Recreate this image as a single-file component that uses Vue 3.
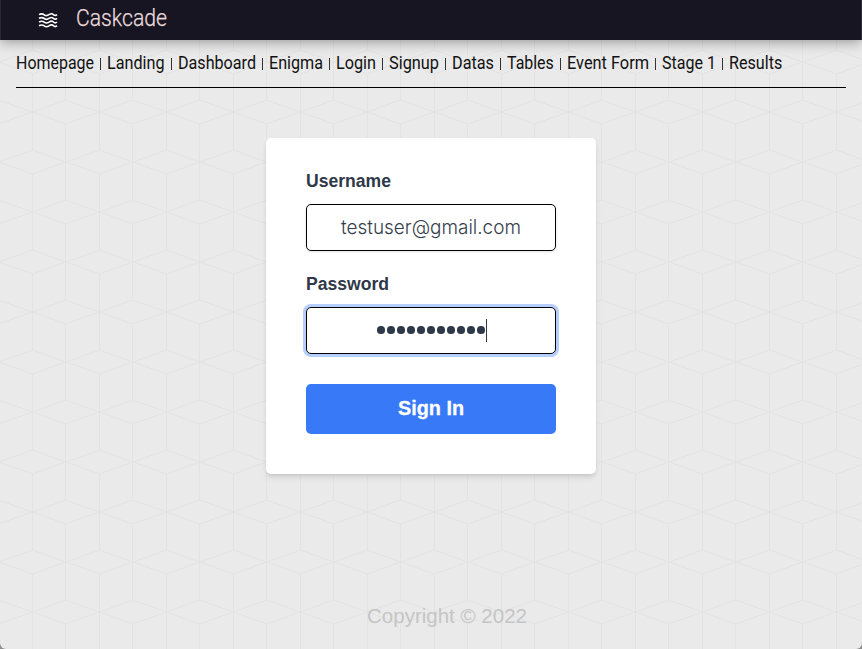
<script setup>
const links = [
  { label: 'Homepage', width: 78 },
  { label: 'Landing', width: 57.5 },
  { label: 'Dashboard', width: 78 },
  { label: 'Enigma', width: 54 },
  { label: 'Login', width: 40 },
  { label: 'Signup', width: 50 },
  { label: 'Datas', width: 42 },
  { label: 'Tables', width: 46.8 },
  { label: 'Event Form', width: 82 },
  { label: 'Stage 1', width: 54 },
  { label: 'Results', width: 53.3 },
]
const waves = [1.6, 5.3, 9, 12.7]
</script>

<template>
  <div class="page">
    <svg class="backdrop" width="862" height="649" aria-hidden="true">
      <defs>
        <pattern id="cubes" x="-1" y="12" width="67" height="100" patternUnits="userSpaceOnUse">
          <path d="M0 50L33.5 38L66.5 50L33.5 62ZM-.5 12L33.5 0L66.5 12M-.5 88L33.5 100L66.5 88M66.5 12L67.5 12.3M66.5 88L67.5 87.7M33.5 0V38M33.5 62V100M66.5 12V88" />
        </pattern>
      </defs>
      <rect width="862" height="649" fill="url(#cubes)" />
    </svg>

    <header class="topbar">
      <svg class="logo" width="18" height="15" viewBox="0 0 18 15" aria-hidden="true">
        <path v-for="y in waves" :key="y" :d="`M0 ${y}Q3 ${y - 1.5} 5.2 ${y + .2}T10 ${y + .1}T14.4 ${y}T18 ${y}`" />
      </svg>
      <svg class="brand" width="92" height="30">
        <text x="0" y="21" textLength="91" lengthAdjust="spacingAndGlyphs">Caskcade</text>
      </svg>
    </header>

    <nav class="links">
      <template v-for="(link, i) in links" :key="link.label">
        <i v-if="i" class="divider"></i>
        <svg class="link" :width="link.width" height="24">
          <text x="0" y="17" :textLength="link.width" lengthAdjust="spacingAndGlyphs">{{ link.label }}</text>
        </svg>
      </template>
    </nav>

    <main class="main">
      <form class="card" @submit.prevent>
        <div class="label">
          <svg width="90" height="26"><text x="0" y="19" textLength="85" lengthAdjust="spacingAndGlyphs">Username</text></svg>
        </div>
        <div class="field">
          <svg class="email" width="180" height="28"><text x="0" y="20" textLength="180" lengthAdjust="spacingAndGlyphs">testuser@gmail.com</text></svg>
        </div>
        <div class="label second">
          <svg width="90" height="26"><text x="0" y="19" textLength="83" lengthAdjust="spacingAndGlyphs">Password</text></svg>
        </div>
        <div class="field focused">
          <span class="dots"><i v-for="n in 11" :key="n"></i></span><span class="caret"></span>
        </div>
        <button class="submit" type="submit">
          <svg width="67" height="30"><text x="0" y="21" textLength="66" lengthAdjust="spacingAndGlyphs">Sign In</text></svg>
        </button>
      </form>
    </main>

    <footer class="footer">
      <svg width="161" height="30"><text x="0" y="22" textLength="160" lengthAdjust="spacingAndGlyphs">Copyright © 2022</text></svg>
    </footer>
  </div>
</template>

<style>
body { margin: 0; background: #8d8d8d; }
</style>

<style scoped>
* { box-sizing: border-box; }
svg { display: block; flex: none; overflow: visible; }
.page {
  position: relative;
  width: 862px;
  height: 649px;
  display: flex;
  flex-direction: column;
  overflow: hidden;
  background: #eaeaea;
  border-radius: 0 0 6px 6px;
  font-family: "Liberation Sans", sans-serif;
}
.backdrop { position: absolute; inset: 0; }
.backdrop path { fill: none; stroke: #e3e3e3; stroke-width: 1; }
.topbar, .links, .main, .footer { position: relative; }
.topbar {
  height: 40px;
  flex: none;
  display: flex;
  align-items: flex-start;
  padding: 5px 0 0 39px;
  gap: 19px;
  background: #171522;
  border-left: 1px solid #292736;
  border-right: 1px solid #292736;
  box-shadow: 0 2px 12px rgba(0, 0, 0, .36);
}
.logo { margin: 8px 0 0 -1px; }
.logo path { fill: none; stroke: #fff; stroke-width: 1.6; }
.brand text { font: 300 23px Roboto, sans-serif; fill: #eadbdc; stroke: #eadbdc; stroke-width: .25; }
.links {
  height: 48px;
  flex: none;
  display: flex;
  align-items: flex-start;
  margin: 0 16px;
  padding-top: 12px;
  border-bottom: 1px solid #000;
}
.link text { font: 400 17.5px Roboto, sans-serif; fill: #111; }
.divider { width: 1px; height: 12px; flex: none; margin: 6px 6px 0 6.1px; background: #333; }
.main { display: flex; justify-content: center; padding-top: 50px; }
.card {
  width: 330px;
  height: 336px;
  display: flex;
  flex-direction: column;
  padding: 30px 40px 40px;
  background: #fff;
  border-radius: 5px;
  box-shadow: 0 4px 6px -1px rgba(0, 0, 0, .1), 0 2px 4px -1px rgba(0, 0, 0, .08);
}
.label { height: 36px; flex: none; }
.label text { font: 700 17.5px "Liberation Sans", sans-serif; fill: #2f3848; }
.second { margin-top: 20px; }
.field {
  height: 47px;
  flex: none;
  display: flex;
  align-items: center;
  justify-content: center;
  border: 1px solid #000;
  border-radius: 5px;
  background: #fff;
  box-shadow: 0 1px 3px rgba(0, 0, 0, .12);
}
.email text { font: 300 19.5px Inter, sans-serif; fill: #343d4c; }
.focused { padding-left: 2px; box-shadow: 0 0 0 3px #b5cefb; }
.dots { display: flex; gap: 2.3px; margin-top: -1px; }
.dots i { width: 7.7px; height: 7.7px; border-radius: 50%; background: #2f3848; }
.caret { width: 1px; height: 23px; margin-left: 1px; background: #2f3848; }
.submit {
  height: 50px;
  flex: none;
  display: flex;
  align-items: center;
  justify-content: center;
  margin-top: 30px;
  padding: 0;
  border: 0;
  border-radius: 5px;
  background: #3779f6;
}
.submit svg { margin-top: -1px; }
.submit text { font: 700 20px "Liberation Sans", sans-serif; fill: #fff; stroke: #fff; stroke-width: .3; }
.footer { display: flex; justify-content: center; margin: 127px 0 0 32px; }
.footer text { font: 400 20px "Liberation Sans", sans-serif; fill: #c5c5c5; }
</style>
